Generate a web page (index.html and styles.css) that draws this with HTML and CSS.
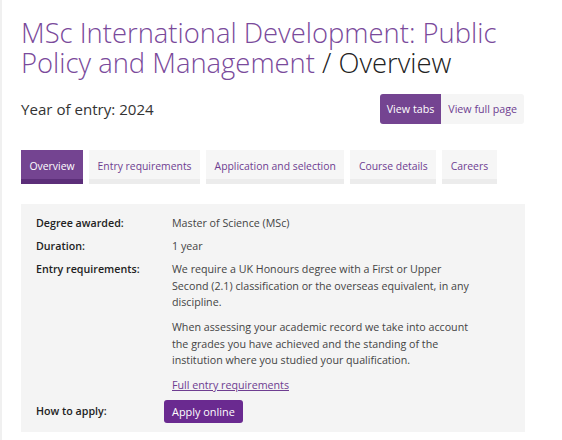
FILE: index.html
```html
<!DOCTYPE html>
<html lang="en">
<head>
    <meta charset="UTF-8">
    <title>MSc International Development: Public Policy and Management</title>
    <link rel="stylesheet" href="styles.css">
</head>
<body>
    <div class="page">
        <h1 class="course-title">MSc International Development: Public Policy and Management <span class="current">/ Overview</span></h1>

        <div class="entry-bar">
            <p class="entry-year">Year of entry: 2024</p>
            <div class="view-switch">
                <a class="view-button active" href="#">View tabs</a>
                <a class="view-button" href="#">View full page</a>
            </div>
        </div>

        <ul class="tabs">
            <li><a class="tab active" href="#">Overview</a></li>
            <li><a class="tab" href="#">Entry requirements</a></li>
            <li><a class="tab" href="#">Application and selection</a></li>
            <li><a class="tab" href="#">Course details</a></li>
            <li><a class="tab" href="#">Careers</a></li>
        </ul>

        <dl class="facts">
            <dt>Degree awarded:</dt>
            <dd>Master of Science (MSc)</dd>

            <dt>Duration:</dt>
            <dd>1 year</dd>

            <dt>Entry requirements:</dt>
            <dd>
                <p>We require a UK Honours degree with a First or Upper Second (2.1) classification or the overseas equivalent, in any discipline.</p>
                <p>When assessing your academic record we take into account the grades you have achieved and the standing of the institution where you studied your qualification.</p>
                <a class="more-link" href="#">Full entry requirements</a>
            </dd>

            <dt class="apply-label">How to apply:</dt>
            <dd><a class="apply-button" href="#">Apply online</a></dd>
        </dl>
    </div>
</body>
</html>
```

FILE: styles.css
```css
body {
    margin: 0;
    font-family: "Open Sans", "Liberation Sans", sans-serif;
    color: #333;
    background: #fff;
    border-left: 2px solid #f0f0f0;
    min-height: 440px;
    box-sizing: border-box;
}

.page {
    width: 504px;
    padding: 18px 0 0 19px;
}

.course-title {
    margin: 0;
    font-size: 27.4px;
    font-weight: 300;
    line-height: 30px;
    color: #7a4a9b;
}

.current {
    color: #222;
}

.entry-bar {
    display: flex;
    justify-content: space-between;
    align-items: center;
    margin-top: 16px;
}

.entry-year {
    margin: 0;
    font-size: 15.1px;
    color: #333;
}

.view-switch {
    display: flex;
    margin-right: 1px;
}

.view-button {
    display: block;
    height: 30px;
    line-height: 30px;
    padding: 0 7px;
    font-size: 10.7px;
    color: #6e3d91;
    background: #f5f5f5;
    text-decoration: none;
    border-radius: 0 3px 3px 0;
}

.view-button.active {
    color: #fff;
    background: #744491;
    border-radius: 3px 0 0 3px;
}

.tabs {
    display: flex;
    gap: 6px;
    list-style: none;
    margin: 26px 0 0;
    padding: 0;
}

.tab {
    display: block;
    height: 29px;
    line-height: 32px;
    padding: 0 8.5px;
    font-size: 10.4px;
    color: #6e3d91;
    background: #f6f6f6;
    border-bottom: 5px solid #ececec;
    text-decoration: none;
    white-space: nowrap;
}

.tab.active {
    color: #fff;
    background: #744491;
    border-bottom-color: #5c2e79;
}

.facts {
    display: grid;
    grid-template-columns: 136px 1fr;
    row-gap: 6.5px;
    margin: 20px 0 0;
    padding: 11px 55px 9px 15px;
    background: #f4f4f4;
    font-size: 10.7px;
    line-height: 16.5px;
}

.facts dt {
    font-weight: 600;
    color: #222;
}

.facts dd {
    margin: 0;
    color: #444;
}

.facts p {
    margin: 0 0 8.5px;
}

.more-link {
    display: inline-block;
    color: #6e3d91;
}

.apply-label {
    align-self: center;
}

.apply-button {
    display: inline-block;
    margin-left: -8px;
    padding: 4px 8px;
    line-height: 15px;
    color: #fff;
    background: #6a2a90;
    border-radius: 3px;
    text-decoration: none;
    font-size: 10.9px;
}
```
